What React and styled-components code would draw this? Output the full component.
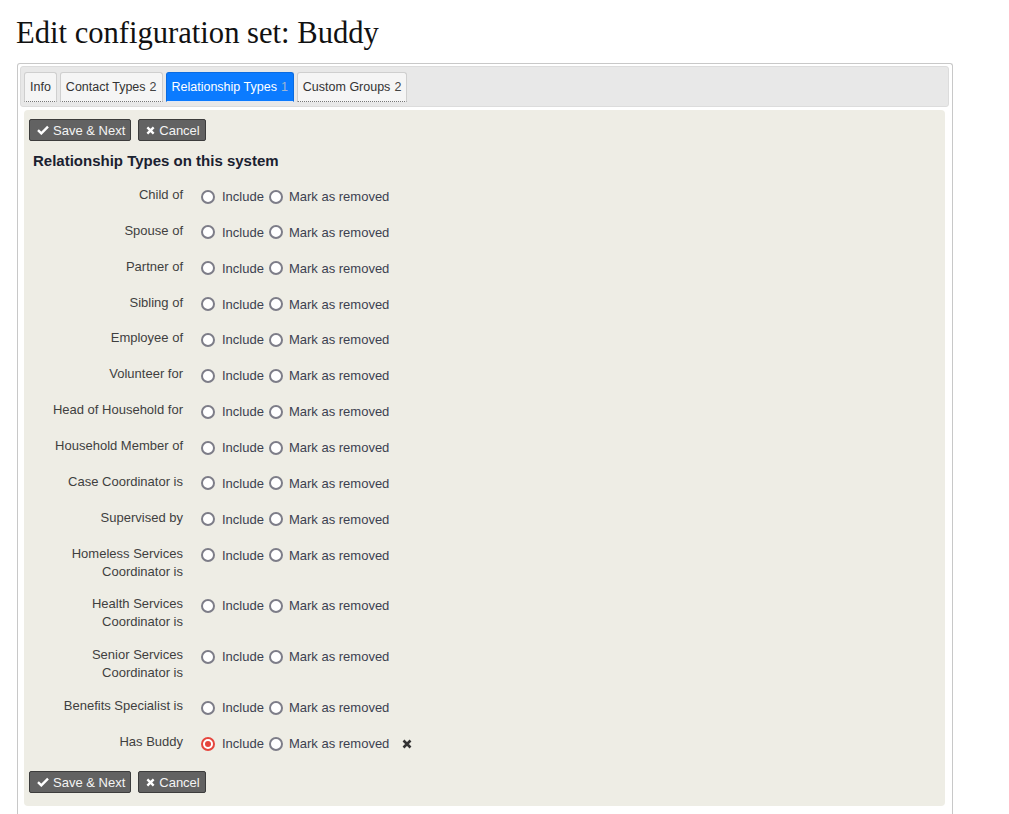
import React from "react";
import styled, { createGlobalStyle } from "styled-components";

const Global = createGlobalStyle`
  html, body { margin: 0; padding: 0; background: #fff; }
  body { font-family: "Liberation Sans", Arial, sans-serif; font-size: 13px; color: #333; }
`;

const Page = styled.div`
  padding: 0 0 0 17px;
`;

const Title = styled.h1`
  margin: 0;
  padding: 15px 0 0 0;
  height: 47px;
  box-sizing: border-box;
  font-family: "Liberation Serif", "Times New Roman", serif;
  font-weight: normal;
  font-size: 30.6px;
  line-height: 36px;
  color: #111;
  margin-left: -1px;
`;

const Container = styled.div`
  width: 936px;
  box-sizing: border-box;
  border: 1px solid #c8c8c8;
  border-bottom: none;
  border-radius: 3px 3px 0 0;
  padding: 2px 3px 0 2px;
  margin-top: 16px;
  min-height: 760px;
`;

const TabBar = styled.div`
  display: flex;
  gap: 3px;
  background: #e8e8e8;
  border: 1px solid #dcdcdc;
  border-radius: 3px;
  padding: 5px 3px 4px 3px;
  height: 41px;
  box-sizing: border-box;
`;

const Tab = styled.div`
  display: flex;
  align-items: center;
  height: 30px;
  box-sizing: border-box;
  padding: 0 5px;
  border: 1px solid ${(p) => (p.$active ? "#0a6be0" : "#cfcfcf")};
  border-bottom: 1px ${(p) => (p.$active ? "solid #e0e8f5" : "dotted #777")};
  border-radius: 3px 3px 0 0;
  background: ${(p) => (p.$active ? "#0b7bff" : "#f5f5f5")};
  color: ${(p) => (p.$active ? "#fff" : "#333")};
  font-size: 12.5px;
  white-space: nowrap;
`;

const Count = styled.span`
  margin-left: 4px;
  color: ${(p) => (p.$active ? "#9fb6d4" : "#444")};
`;

const Panel = styled.div`
  margin: 3px 0 0 4px;
  width: 921px;
  background: #eeede5;
  border-radius: 4px;
  padding: 9px 5px 13px 5px;
  box-sizing: border-box;
`;

const ButtonRow = styled.div`
  display: flex;
  gap: 7px;
`;

const Button = styled.button`
  display: inline-flex;
  align-items: center;
  gap: 4px;
  height: 22px;
  padding: 0 5px 0 7px;
  background: #626262;
  border: 1px solid #3c3c3c;
  border-radius: 2px;
  color: #f4f4f4;
  font-family: "Liberation Sans", Arial, sans-serif;
  font-size: 13px;
  cursor: pointer;
`;

const Heading = styled.h3`
  margin: 11px 0 16px 4px;
  font-size: 15px;
  line-height: 18px;
  font-weight: bold;
  color: #1a2130;
`;

const Rows = styled.div`
  display: flex;
  flex-direction: column;
  gap: 14.87px;
  margin-bottom: 17px;
`;

const Row = styled.div`
  display: flex;
  align-items: flex-start;
`;

const Label = styled.div`
  width: 154px;
  text-align: right;
  line-height: 18px;
  font-size: 13px;
  color: #3f3f3f;
`;

const Options = styled.div`
  display: flex;
  align-items: center;
  height: 21px;
  margin-left: 18px;
  color: #3c4150;
`;

const Radio = styled.span`
  width: 14px;
  height: 14px;
  box-sizing: border-box;
  border-radius: 50%;
  border: 2px solid ${(p) => (p.$checked ? "#e5453d" : "#7d7d88")};
  background: #fff;
  display: inline-flex;
  align-items: center;
  justify-content: center;
  margin-right: ${(p) => p.$mr}px;
  &::after {
    content: "";
    width: 6px;
    height: 6px;
    border-radius: 50%;
    background: ${(p) => (p.$checked ? "#e5453d" : "transparent")};
  }
`;

const OptText = styled.span`
  margin-right: ${(p) => p.$mr || 0}px;
`;

const Remove = styled.span`
  margin-left: 13px;
  display: inline-flex;
  align-items: center;
`;

const Check = () => (
  <svg width="12" height="10" viewBox="0 0 12 10">
    <path d="M1 5.2 L4.3 8.4 L11 1.6" stroke="#fff" strokeWidth="2.4" fill="none" />
  </svg>
);

const Times = ({ color = "#fff", size = 9 }) => (
  <svg width={size} height={size} viewBox="0 0 10 10">
    <path d="M1.5 1.5 L8.5 8.5 M8.5 1.5 L1.5 8.5" stroke={color} strokeWidth="2.6" strokeLinecap="butt" fill="none" />
  </svg>
);

const types = [
  "Child of",
  "Spouse of",
  "Partner of",
  "Sibling of",
  "Employee of",
  "Volunteer for",
  "Head of Household for",
  "Household Member of",
  "Case Coordinator is",
  "Supervised by",
  ["Homeless Services", "Coordinator is"],
  ["Health Services", "Coordinator is"],
  ["Senior Services", "Coordinator is"],
  "Benefits Specialist is",
  "Has Buddy",
];

const Buttons = () => (
  <ButtonRow>
    <Button>
      <Check />
      Save &amp; Next
    </Button>
    <Button>
      <Times />
      Cancel
    </Button>
  </ButtonRow>
);

export default function App() {
  return (
    <Page>
      <Global />
      <Title>Edit configuration set: Buddy</Title>
      <Container>
        <TabBar>
          <Tab>Info</Tab>
          <Tab>
            Contact Types<Count>2</Count>
          </Tab>
          <Tab $active>
            Relationship Types<Count $active>1</Count>
          </Tab>
          <Tab>
            Custom Groups<Count>2</Count>
          </Tab>
        </TabBar>
        <Panel>
          <Buttons />
          <Heading>Relationship Types on this system</Heading>
          <Rows>
            {types.map((t, i) => {
              const last = i === types.length - 1;
              return (
                <Row key={i}>
                  <Label>
                    {Array.isArray(t) ? (
                      <>
                        {t[0]}
                        <br />
                        {t[1]}
                      </>
                    ) : (
                      t
                    )}
                  </Label>
                  <Options>
                    <Radio $checked={last} $mr={7} />
                    <OptText $mr={5}>Include</OptText>
                    <Radio $mr={6} />
                    <OptText>Mark as removed</OptText>
                    {last && (
                      <Remove>
                        <Times color="#333" size={10} />
                      </Remove>
                    )}
                  </Options>
                </Row>
              );
            })}
          </Rows>
          <Buttons />
        </Panel>
      </Container>
    </Page>
  );
}
